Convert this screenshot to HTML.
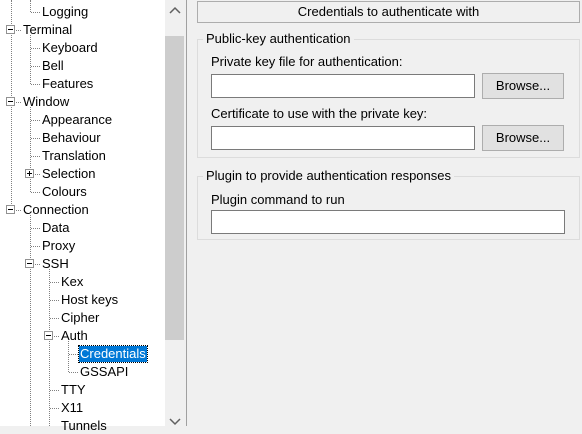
<!DOCTYPE html>
<html><head><style>
*{margin:0;padding:0;box-sizing:border-box}
body{width:582px;height:426px;background:#f0f0f0;font-family:"Liberation Sans",sans-serif;font-size:13px;color:#000;position:relative;overflow:hidden}
.tree{position:absolute;left:0;top:0;width:165px;height:426px;background:#fff}
.sb{position:absolute;left:165px;top:0;width:20px;height:426px;background:#f0f0f0}
.thumb{position:absolute;left:165px;top:36px;width:19px;height:304px;background:#cdcdcd}
.bd{position:absolute;left:186px;top:0;width:1px;height:426px;background:#a0a0a0}
.t{position:absolute;white-space:nowrap;line-height:16px}
.vl{position:absolute;width:0;border-left:1px dotted #808080}
.hl{position:absolute;height:0;border-top:1px dotted #808080}
.bx{position:absolute;width:9px;height:9px;border:1px solid #919191;background:#fff}
.bx:after{content:"";position:absolute;left:1px;top:3px;width:5px;height:1px;background:#000}
.bx.p:before{content:"";position:absolute;left:3px;top:1px;width:1px;height:5px;background:#000}
.sel{background:#0078d7;color:#fff;outline:1px dotted #000;padding:0 1px}
.box{position:absolute;border:1px solid #dcdcdc}
.in{position:absolute;background:#fff;border:1px solid #7a7a7a}
.btn{position:absolute;background:#e1e1e1;border:1px solid #adadad;text-align:center;line-height:23px}
.lg{position:absolute;background:#f0f0f0;padding:0 3px;line-height:16px}
</style></head><body>
<div class="tree">
<div class="vl" style="left:11px;top:0;height:206px"></div>
<div class="vl" style="left:30px;top:0;height:12px"></div>
<div class="hl" style="left:31px;top:12px;width:9px"></div>
<div class="t" style="left:42px;top:4px">Logging</div>
<div class="hl" style="left:16px;top:30px;width:5px"></div>
<div class="bx" style="left:6px;top:25px"></div>
<div class="t" style="left:23px;top:22px">Terminal</div>
<div class="vl" style="left:30px;top:35px;height:49px"></div>
<div class="hl" style="left:31px;top:48px;width:9px"></div><div class="t" style="left:42px;top:40px">Keyboard</div>
<div class="hl" style="left:31px;top:66px;width:9px"></div><div class="t" style="left:42px;top:58px">Bell</div>
<div class="hl" style="left:31px;top:84px;width:9px"></div><div class="t" style="left:42px;top:76px">Features</div>
<div class="bx" style="left:6px;top:97px"></div><div class="hl" style="left:16px;top:102px;width:5px"></div>
<div class="t" style="left:23px;top:94px">Window</div>
<div class="vl" style="left:30px;top:107px;height:85px"></div>
<div class="hl" style="left:31px;top:120px;width:9px"></div><div class="t" style="left:42px;top:112px">Appearance</div>
<div class="hl" style="left:31px;top:138px;width:9px"></div><div class="t" style="left:42px;top:130px">Behaviour</div>
<div class="hl" style="left:31px;top:156px;width:9px"></div><div class="t" style="left:42px;top:148px">Translation</div>
<div class="bx p" style="left:25px;top:169px"></div><div class="hl" style="left:35px;top:174px;width:5px"></div><div class="t" style="left:42px;top:166px">Selection</div>
<div class="hl" style="left:31px;top:192px;width:9px"></div><div class="t" style="left:42px;top:184px">Colours</div>
<div class="bx" style="left:6px;top:205px"></div><div class="hl" style="left:16px;top:210px;width:5px"></div>
<div class="t" style="left:23px;top:202px">Connection</div>
<div class="vl" style="left:30px;top:215px;height:211px"></div>
<div class="hl" style="left:31px;top:228px;width:9px"></div><div class="t" style="left:42px;top:220px">Data</div>
<div class="hl" style="left:31px;top:246px;width:9px"></div><div class="t" style="left:42px;top:238px">Proxy</div>
<div class="bx" style="left:25px;top:259px"></div><div class="hl" style="left:35px;top:264px;width:5px"></div><div class="t" style="left:42px;top:256px">SSH</div>
<div class="vl" style="left:49px;top:269px;height:157px"></div>
<div class="hl" style="left:50px;top:282px;width:9px"></div><div class="t" style="left:61px;top:274px">Kex</div>
<div class="hl" style="left:50px;top:300px;width:9px"></div><div class="t" style="left:61px;top:292px">Host keys</div>
<div class="hl" style="left:50px;top:318px;width:9px"></div><div class="t" style="left:61px;top:310px">Cipher</div>
<div class="bx" style="left:44px;top:331px"></div><div class="hl" style="left:54px;top:336px;width:5px"></div><div class="t" style="left:61px;top:328px">Auth</div>
<div class="vl" style="left:68px;top:341px;height:31px"></div>
<div class="hl" style="left:69px;top:354px;width:9px"></div><div class="t sel" style="left:79px;top:346px">Credentials</div>
<div class="hl" style="left:69px;top:372px;width:9px"></div><div class="t" style="left:80px;top:364px">GSSAPI</div>
<div class="hl" style="left:50px;top:390px;width:9px"></div><div class="t" style="left:61px;top:382px">TTY</div>
<div class="hl" style="left:50px;top:408px;width:9px"></div><div class="t" style="left:61px;top:400px">X11</div>
<div class="t" style="left:61px;top:418px">Tunnels</div>
</div>
<div class="sb"></div><div class="thumb"></div>
<svg style="position:absolute;left:168px;top:6px" width="14" height="10"><path d="M2 7 L7 2 L12 7" stroke="#606060" stroke-width="1.5" fill="none"/></svg>
<svg style="position:absolute;left:168px;top:416px" width="14" height="10"><path d="M2 3 L7 8 L12 3" stroke="#606060" stroke-width="1.5" fill="none"/></svg>
<div class="bd"></div>
<div style="position:absolute;left:197px;top:1px;width:383px;height:22px;border:1px solid #adadad;text-align:center;line-height:20px">Credentials to authenticate with</div>
<div class="box" style="left:197px;top:39px;width:383px;height:119px"></div>
<div class="lg" style="left:203px;top:31px">Public-key authentication</div>
<div class="t" style="left:211px;top:54px">Private key file for authentication:</div>
<div class="in" style="left:211px;top:74px;width:264px;height:24px"></div>
<div class="btn" style="left:482px;top:73px;width:82px;height:26px">Browse...</div>
<div class="t" style="left:211px;top:106px">Certificate to use with the private key:</div>
<div class="in" style="left:211px;top:126px;width:264px;height:24px"></div>
<div class="btn" style="left:482px;top:125px;width:82px;height:26px">Browse...</div>
<div class="box" style="left:197px;top:176px;width:383px;height:64px"></div>
<div class="lg" style="left:203px;top:168px">Plugin to provide authentication responses</div>
<div class="t" style="left:211px;top:192px">Plugin command to run</div>
<div class="in" style="left:211px;top:210px;width:354px;height:24px"></div>
</body></html>
